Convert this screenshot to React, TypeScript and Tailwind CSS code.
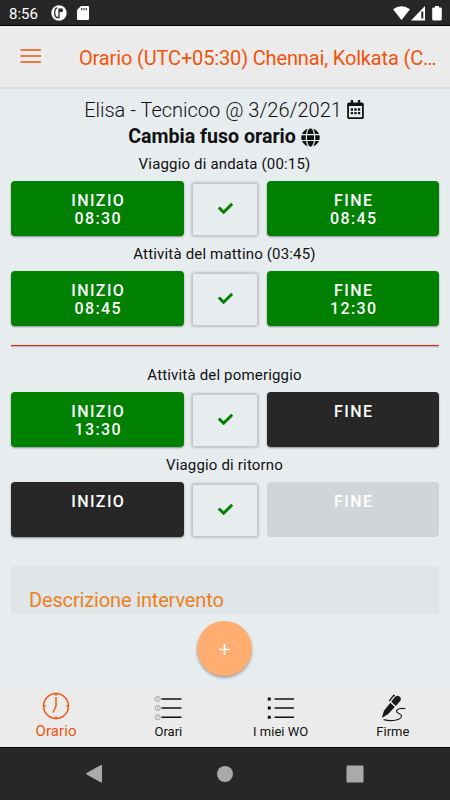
import { FaCheck, FaGlobe, FaRegCalendarAlt } from 'react-icons/fa'

type Slot = { text: string; time?: string; state: 'done' | 'open' | 'off' }

const colors = {
    done: 'bg-[#008000]',
    open: 'bg-[#272727]',
    off: 'bg-[#d0d5d8] shadow-none!',
}

function TimeButton({ text, time, state }: Slot) {
    return (
        <button
            className={`h-[55px] w-[172.5px] rounded pt-[11px] pl-[2px] flex flex-col items-center text-[16px] leading-[18px] font-medium tracking-[1.4px] text-white shadow-[0_1px_2px_rgba(0,0,0,0.4)] ${colors[state]}`}
        >
            <span>{text}</span>
            <span>{time}</span>
        </button>
    )
}

function Row({ label, start, end }: { label: string; start: Slot; end: Slot }) {
    return (
        <div className="h-[90px] pl-[11px] pr-[11px]">
            <p className="h-[28px] pt-px pr-px text-center text-[15px] leading-[20px] tracking-[0.17px]">{label}</p>
            <div className="flex justify-between items-start">
                <TimeButton {...start} />
                <div className="mt-[2px] h-[53px] w-[66px] flex items-center justify-center pb-[2px] border border-[#c4c8cb] rounded-xs shadow-[0_0_3px_rgba(0,0,0,0.35)]">
                    <FaCheck className="size-[15px] text-[#008000]" />
                </div>
                <TimeButton {...end} />
            </div>
        </div>
    )
}

function App() {
    return (
        <div className="w-[450px] h-[800px] flex flex-col overflow-hidden bg-[#e7ecef] text-[#111] font-['Roboto',sans-serif]">
            {/* Status bar */}
            <div className="h-[26px] shrink-0 bg-[#272727] border-b border-black flex items-center pl-[9px] pr-[7px] text-white">
                <span className="text-[15px] leading-[26px] pt-[2px] w-[42px]">8:56</span>
                <svg width="16" height="16" viewBox="0 0 16 16" className="mt-px">
                    <circle cx="8" cy="8" r="7.7" fill="#fff" />
                    <path d="M6.5 3.2H5Q3.600 5 3.600 8T5.500 12.500H8V3.500" fill="none" stroke="#272727" strokeWidth="1.3" />
                    <circle cx="10" cy="5.3" r="2" fill="#272727" />
                </svg>
                <svg width="12" height="14" viewBox="0 0 12 14" className="ml-[10px] mt-px">
                    <path d="M4 0h7q1 0 1 1v12q0 1-1 1H1q-1 0-1-1V4z" fill="#fff" />
                    <path d="M4.8 2v2.3M7 2v2.3M9.3 2v2.3" stroke="#272727" strokeWidth="1.1" />
                </svg>
                <div className="flex-1" />
                <svg width="50" height="15" viewBox="0 0 50 15" className="mt-px">
                    <path d="M0 3.2Q8.5-2.6 17 3.2L8.5 14z" fill="#fff" />
                    <path d="M32 0v14.5H18z" fill="#fff" />
                    <path d="M28.3 5.5h2v7h-2z" fill="#272727" />
                    <path d="M42 0h4v1.5h1.5q1.3 0 1.3 1.3v10.4q0 1.3-1.3 1.3h-7q-1.3 0-1.3-1.3V2.8q0-1.3 1.3-1.3H42z" fill="#fff" />
                </svg>
            </div>

            {/* Header */}
            <div className="h-[63px] shrink-0 bg-[#ebebeb] border-b-2 border-[#d9dee1] flex items-center pl-[20px] text-[#f1530a]">
                <svg width="21" height="16" viewBox="0 0 21 16" className="mb-px">
                    <path d="M.5 2H21M.5 8H21M.5 14H21" stroke="currentColor" strokeWidth="1.6" />
                </svg>
                <h1 className="ml-[38px] pt-[2px] text-[20px] leading-[28px] tracking-[-0.15px] whitespace-nowrap">
                    Orario (UTC+05:30) Chennai, Kolkata (C…
                </h1>
            </div>

            {/* Orari */}
            <div className="h-[525px] shrink-0 overflow-hidden pt-[7px]">
                <div className="flex items-center justify-center gap-[4px] h-[27px] pr-px text-[20px] font-light">
                    <span>Elisa - Tecnicoo @ 3/26/2021</span>
                    <FaRegCalendarAlt className="size-[19px]" />
                </div>
                <div className="flex items-center justify-center gap-[5px] h-[28px] pr-[2px] text-[19.6px] font-bold">
                    <span>Cambia fuso orario</span>
                    <FaGlobe className="size-[19px]" />
                </div>
                <div className="pt-[2px]">
                    <Row
                        label="Viaggio di andata (00:15)"
                        start={{ text: 'INIZIO', time: '08:30', state: 'done' }}
                        end={{ text: 'FINE', time: '08:45', state: 'done' }}
                    />
                    <Row
                        label="Attività del mattino (03:45)"
                        start={{ text: 'INIZIO', time: '08:45', state: 'done' }}
                        end={{ text: 'FINE', time: '12:30', state: 'done' }}
                    />
                    <div className="mx-[11px] mt-[12px] mb-[18px] h-px bg-[#f42a00] shadow-[0_1px_1px_rgba(0,0,0,0.25)]" />
                    <Row
                        label="Attività del pomeriggio"
                        start={{ text: 'INIZIO', time: '13:30', state: 'done' }}
                        end={{ text: 'FINE', state: 'open' }}
                    />
                    <Row
                        label="Viaggio di ritorno"
                        start={{ text: 'INIZIO', state: 'open' }}
                        end={{ text: 'FINE', state: 'off' }}
                    />
                </div>
                <div className="mx-[11px] mt-[22px] h-[80px] rounded-t bg-[#e0e5e8] pl-[18px] pt-[20px] text-[20px] leading-[28px] tracking-[-0.15px] text-[#ea8120]">
                    Descrizione intervento
                </div>
            </div>

            <div className="h-[72px] shrink-0 flex justify-center pt-[7px] pr-px">
                <button className="size-[55px] rounded-full bg-[#ffad71] text-white flex items-center justify-center shadow-[0_2px_3px_rgba(0,0,0,0.3)]">
                    <svg width="11" height="11" viewBox="0 0 11 11" className="mt-px">
                        <path d="M5.5 0v11M0 5.5h11" stroke="currentColor" strokeWidth="1.6" />
                    </svg>
                </button>
            </div>

            {/* Tab bar */}
            <div className="h-[61px] shrink-0 grid grid-cols-4 bg-[#ebebeb] pr-px text-[13px]">
                <div className="flex flex-col items-center pt-[6px] text-[#f1530a]">
                    <svg width="28" height="28" viewBox="0 0 28 28" fill="none" stroke="currentColor">
                        <circle cx="14" cy="14" r="12.5" strokeWidth="1.4" />
                        <path d="M14 5v9l-3 6.5" strokeWidth="1.4" />
                        <path d="M14 1.5v2.2M14 24.3v2.2M1.5 14h2.2M24.3 14h2.2" strokeWidth="1.4" />
                    </svg>
                    <span className="text-[15px] leading-[23px] tracking-[0.1px]">Orario</span>
                </div>
                <div className="flex flex-col items-center pt-[8px]">
                    <svg width="28" height="28" viewBox="0 0 28 28" fill="none" stroke="#111">
                        <path d="M7.5 5h20M7.5 14h20M7.5 23.2h20" strokeWidth="1.4" />
                        <g stroke="#888" strokeWidth="0.7">
                            <circle cx="3.7" cy="5" r="2.6" />
                            <circle cx="3.7" cy="14" r="2.6" />
                            <circle cx="3.7" cy="23.2" r="2.6" />
                            <path d="M3.9 3.2V5L3 6.4M3.9 12.2V14L3 15.4M3.9 21.4v1.8L3 24.6" />
                        </g>
                    </svg>
                    <span className="leading-[20px]">Orari</span>
                </div>
                <div className="flex flex-col items-center pt-[8px]">
                    <svg width="28" height="28" viewBox="0 0 28 28" stroke="#111">
                        <path d="M7.5 5H27M7.5 14H27M7.5 23.2H27" strokeWidth="1.4" />
                        <path d="M.8 5h3M.8 14h3M.8 23.2h3" strokeWidth="3" />
                    </svg>
                    <span className="leading-[20px]">I miei WO</span>
                </div>
                <div className="flex flex-col items-center pt-[8px]">
                    <svg width="28" height="28" viewBox="0 0 28 28" fill="none" stroke="#1b191c">
                        {/* pen */}
                        <path d="M15.4 3.4Q18 .8 20.400 2.400Q23 4.400 21.200 7L16.800 12 12.300 7.800z" fill="#1b191c" stroke="none" />
                        <path d="M11.300 8.800l4.500 4.200-6.600 7L2.800 24l2.200-7.200z" fill="#1b191c" stroke="none" />
                        <path d="M10.200 7.200L14.600 1.400l1.200.8" strokeWidth="1.4" />
                        {/* signature */}
                        <path d="M26.5 14.8c-4-.9-9-.3-9 2.500 0 2.400 5.300 2 5 5-.4 3.800-10 5.600-18 3.300" strokeWidth="1.1" />
                    </svg>
                    <span className="leading-[20px]">Firme</span>
                </div>
            </div>

            {/* Android navigation */}
            <div className="h-[53px] shrink-0 bg-[#272727] border-t border-black flex items-center justify-center">
                <svg width="278" height="20" viewBox="0 0 278 20" fill="#aaa">
                    <path d="M14.5 1.2Q16 .5 16 2v15.5q0 1.5-1.5.8L.6 10.6Q-.4 9.8.6 9z" />
                    <circle cx="139" cy="10" r="8" />
                    <rect x="260.5" y="1.5" width="17" height="17" rx="1.2" />
                </svg>
            </div>
        </div>
    )
}

export default App
